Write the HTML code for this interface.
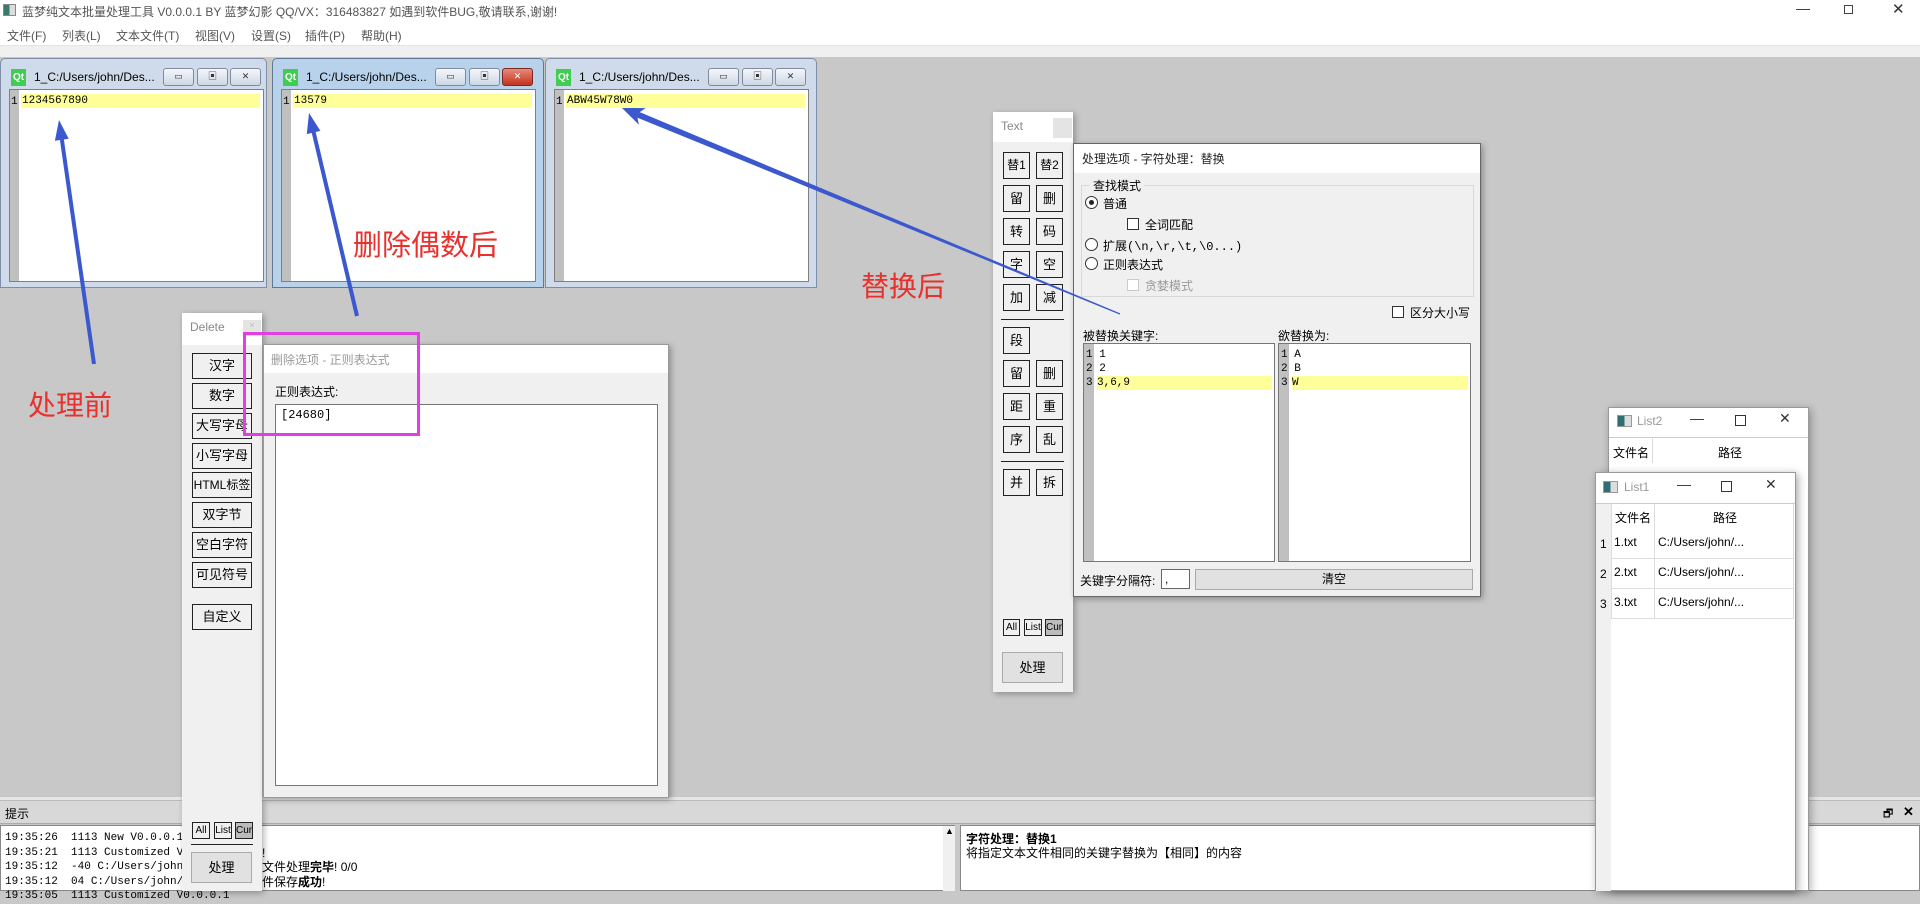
<!DOCTYPE html>
<html><head><meta charset="utf-8">
<style>
*{box-sizing:border-box;margin:0;padding:0}
body{width:1920px;height:891px;overflow:hidden;position:relative;background:#c8c8c8;font-family:"Liberation Sans","Noto Sans CJK SC",sans-serif;font-size:12px;color:#000}
.a{position:absolute}
.mono{font-family:"Liberation Mono","WenQuanYi Zen Hei",monospace}
.sw{position:absolute;top:58px;width:272px;height:230px;background:#cfdbea;border:1px solid #7d8ea6;border-radius:5px 5px 0 0}
.sw .qt{position:absolute;left:10px;top:10px;width:15px;height:17px;background:#41cd52;color:#fff;font-size:10px;font-weight:bold;text-align:center;line-height:17px}
.sw .tt{position:absolute;left:33px;top:11px;font-size:12px;color:#000}
.sw .b{position:absolute;top:9px;width:31px;height:18px;border:1px solid #7f8ca0;border-radius:3px;background:linear-gradient(#f4f7fb,#cdd7e4);font-size:9px;text-align:center;line-height:15px;color:#333}
.sw .ed{position:absolute;left:8px;top:30px;width:255px;height:193px;background:#fff;border:1px solid #808080}
.sw .gut{position:absolute;left:0;top:0;width:9px;height:100%;background:#c0c0c0}
.sw .ln{position:absolute;left:1px;top:6px;font-size:11px}
.sw .hl{position:absolute;left:11px;top:4px;right:3px;height:14px;background:#ffff99;font-size:11px;padding-left:1px;line-height:15px}
.btn{position:absolute;border:1px solid #222;background:#f0f0f0;text-align:center;font-size:13px}
.pb{position:absolute;background:#fff;border:1px solid #777}
.rad{position:absolute;width:13px;height:13px;border:1px solid #333;border-radius:50%;background:#fff}
.chk{position:absolute;width:12px;height:12px;border:1px solid #333;background:#fff}
.lbl{position:absolute;font-size:12px;white-space:nowrap}
</style></head><body>
<!-- title/menu -->
<div class="a" style="left:0;top:0;width:1920px;height:45px;background:#fff"></div>
<div class="a" style="left:3px;top:4px;width:13px;height:12px;border:1px solid #888;background:linear-gradient(90deg,#3a7a6a 50%,#ddd 50%)"></div>
<div class="lbl" style="left:22px;top:3px;color:#555;font-size:12px">蓝梦纯文本批量处理工具 V0.0.0.1 BY 蓝梦幻影 QQ/VX：316483827 如遇到软件BUG,敬请联系,谢谢!</div>
<div class="lbl" style="left:1796px;top:0px;color:#333;font-size:14px">—</div>
<div class="a" style="left:1844px;top:5px;width:9px;height:9px;border:1px solid #444"></div>
<div class="lbl" style="left:1892px;top:0px;color:#333;font-size:15px">✕</div>
<div class="lbl" style="left:7px;top:27px;color:#555">文件(F)</div>
<div class="lbl" style="left:62px;top:27px;color:#555">列表(L)</div>
<div class="lbl" style="left:116px;top:27px;color:#555">文本文件(T)</div>
<div class="lbl" style="left:195px;top:27px;color:#555">视图(V)</div>
<div class="lbl" style="left:251px;top:27px;color:#555">设置(S)</div>
<div class="lbl" style="left:305px;top:27px;color:#555">插件(P)</div>
<div class="lbl" style="left:361px;top:27px;color:#555">帮助(H)</div>
<div class="a" style="left:0;top:45px;width:1920px;height:12px;background:#f0f0f0;border-top:1px solid #e4e4e4"></div>

<!-- sub windows -->
<div class="sw" style="left:0;width:267px">
<div class="qt">Qt</div><div class="tt">1_C:/Users/john/Des...</div>
<div class="b" style="left:162px">▭</div><div class="b" style="left:196px">▣</div><div class="b" style="left:229px">✕</div>
<div class="ed" style="width:255px"><div class="gut"></div><div class="ln mono">1</div><div class="hl mono">1234567890</div></div>
</div>
<div class="sw" style="left:272px;background:#b9d2ec;border-color:#5f7896">
<div class="qt">Qt</div><div class="tt">1_C:/Users/john/Des...</div>
<div class="b" style="left:162px">▭</div><div class="b" style="left:196px">▣</div><div class="b" style="left:229px;background:linear-gradient(#e88a7a,#c2331f);color:#fff;border-color:#7a2a20">✕</div>
<div class="ed"><div class="gut"></div><div class="ln mono">1</div><div class="hl mono">13579</div></div>
</div>
<div class="sw" style="left:545px">
<div class="qt">Qt</div><div class="tt">1_C:/Users/john/Des...</div>
<div class="b" style="left:162px">▭</div><div class="b" style="left:196px">▣</div><div class="b" style="left:229px">✕</div>
<div class="ed"><div class="gut"></div><div class="ln mono">1</div><div class="hl mono">ABW45W78W0</div></div>
</div>

<!-- red labels -->
<div class="lbl" style="left:28px;top:384px;color:#e8302c;font-size:28px">处理前</div>
<div class="lbl" style="left:353px;top:222px;color:#e8302c;font-size:29px">删除偶数后</div>
<div class="lbl" style="left:861px;top:265px;color:#e8302c;font-size:28px">替换后</div>

<!-- dock -->
<div class="a" style="left:0;top:797px;width:1920px;height:4px;background:#e6e6e6"></div>
<div class="a" style="left:0;top:800px;width:1920px;height:24px;background:#d8d8d8;border-top:1px solid #bbb;border-bottom:1px solid #aaa"></div>
<div class="lbl" style="left:5px;top:805px">提示</div>
<div class="lbl" style="left:1883px;top:805px;font-size:11px">🗗</div>
<div class="lbl" style="left:1903px;top:804px;font-size:13px;font-weight:bold">✕</div>
<div class="a" style="left:0;top:825px;width:955px;height:66px;background:#fff;border:1px solid #888"></div>
<div class="a" style="left:943px;top:826px;width:12px;height:65px;background:#f0f0f0"></div>
<div class="lbl" style="left:945px;top:826px;font-size:9px">▲</div>
<div class="a" style="left:960px;top:825px;width:960px;height:66px;background:#fff;border:1px solid #888"></div>
<div class="mono" style="position:absolute;left:5px;top:831px;font-size:11px;line-height:14.5px;white-space:pre">19:35:26  1113 New V0.0.0.1 插件
19:35:21  1113 Customized V0.0.0.1
19:35:12  -40 C:/Users/john/Desktop
19:35:12  04 C:/Users/john/Desktop
19:35:05  1113 Customized V0.0.0.1</div>
<div style="position:absolute;left:262px;top:831px;font-size:12px;line-height:14.5px;white-space:pre;font-family:'Liberation Sans','Noto Sans CJK SC',sans-serif">
!
文件处理<b>完毕</b>! 0/0
件保存<b>成功</b>!</div>
<div class="lbl" style="left:966px;top:830px;font-weight:bold">字符处理：替换1</div>
<div class="lbl" style="left:966px;top:844px">将指定文本文件相同的关键字替换为【相同】的内容</div>

<!-- Delete panel -->
<div class="a" style="left:182px;top:313px;width:80px;height:578px;background:#f0f0f0;box-shadow:2px 2px 6px rgba(0,0,0,.3)"></div>
<div class="a" style="left:182px;top:313px;width:80px;height:32px;background:#fff"></div>
<div class="lbl" style="left:190px;top:320px;color:#888;font-size:12px">Delete</div>
<div class="a" style="left:243px;top:320px;width:18px;height:16px;background:#e4e4e4;color:#bbb;font-size:9px;text-align:center">×</div>
<div class="btn" style="left:192px;top:353px;width:60px;height:26px;line-height:24px">汉字</div>
<div class="btn" style="left:192px;top:383px;width:60px;height:26px;line-height:24px">数字</div>
<div class="btn" style="left:192px;top:413px;width:60px;height:26px;line-height:24px">大写字母</div>
<div class="btn" style="left:192px;top:443px;width:60px;height:26px;line-height:24px">小写字母</div>
<div class="btn" style="left:192px;top:472px;width:60px;height:26px;line-height:24px;font-size:12px">HTML标签</div>
<div class="btn" style="left:192px;top:502px;width:60px;height:26px;line-height:24px">双字节</div>
<div class="btn" style="left:192px;top:532px;width:60px;height:26px;line-height:24px">空白字符</div>
<div class="btn" style="left:192px;top:562px;width:60px;height:26px;line-height:24px">可见符号</div>
<div class="btn" style="left:192px;top:604px;width:60px;height:26px;line-height:24px">自定义</div>
<div class="btn" style="left:192px;top:822px;width:18px;height:17px;font-size:10px;line-height:15px">All</div>
<div class="btn" style="left:214px;top:822px;width:18px;height:17px;font-size:10px;line-height:15px">List</div>
<div class="btn" style="left:235px;top:822px;width:18px;height:17px;font-size:10px;line-height:15px;background:#bbb">Cur</div>
<div class="a" style="left:191px;top:844px;width:62px;height:1px;background:#222"></div>
<div class="btn" style="left:191px;top:852px;width:61px;height:31px;line-height:29px;border-color:#aaa;background:#e1e1e1">处理</div>

<!-- Delete options -->
<div class="a" style="left:263px;top:344px;width:406px;height:454px;background:#f0f0f0;border:1px solid #999;box-shadow:2px 2px 6px rgba(0,0,0,.3)"></div>
<div class="a" style="left:264px;top:345px;width:404px;height:28px;background:#fff"></div>
<div class="lbl" style="left:271px;top:351px;color:#999">删除选项 - 正则表达式</div>
<div class="lbl" style="left:275px;top:383px">正则表达式:</div>
<div class="pb" style="left:275px;top:404px;width:383px;height:382px"></div>
<div class="lbl mono" style="left:281px;top:408px">[24680]</div>
<div class="a" style="left:243px;top:332px;width:177px;height:104px;border:3px solid #e23fe0"></div>

<!-- Text panel -->
<div class="a" style="left:993px;top:112px;width:80px;height:580px;background:#f0f0f0;box-shadow:2px 2px 6px rgba(0,0,0,.3)"></div>
<div class="a" style="left:993px;top:112px;width:80px;height:30px;background:#fff"></div>
<div class="lbl" style="left:1001px;top:119px;color:#888">Text</div>
<div class="a" style="left:1053px;top:118px;width:19px;height:20px;background:#e4e4e4"></div>
<div class="btn" style="left:1003px;top:152px;width:27px;height:27px;line-height:25px;font-size:12px">替1</div>
<div class="btn" style="left:1036px;top:152px;width:27px;height:27px;line-height:25px;font-size:12px">替2</div>
<div class="btn" style="left:1003px;top:185px;width:27px;height:27px;line-height:25px">留</div>
<div class="btn" style="left:1036px;top:185px;width:27px;height:27px;line-height:25px">删</div>
<div class="btn" style="left:1003px;top:218px;width:27px;height:27px;line-height:25px">转</div>
<div class="btn" style="left:1036px;top:218px;width:27px;height:27px;line-height:25px">码</div>
<div class="btn" style="left:1003px;top:251px;width:27px;height:27px;line-height:25px">字</div>
<div class="btn" style="left:1036px;top:251px;width:27px;height:27px;line-height:25px">空</div>
<div class="btn" style="left:1003px;top:284px;width:27px;height:27px;line-height:25px">加</div>
<div class="btn" style="left:1036px;top:284px;width:27px;height:27px;line-height:25px">减</div>
<div class="a" style="left:1001px;top:319px;width:63px;height:1px;background:#222"></div>
<div class="btn" style="left:1003px;top:327px;width:27px;height:27px;line-height:25px">段</div>
<div class="btn" style="left:1003px;top:360px;width:27px;height:27px;line-height:25px">留</div>
<div class="btn" style="left:1036px;top:360px;width:27px;height:27px;line-height:25px">删</div>
<div class="btn" style="left:1003px;top:393px;width:27px;height:27px;line-height:25px">距</div>
<div class="btn" style="left:1036px;top:393px;width:27px;height:27px;line-height:25px">重</div>
<div class="btn" style="left:1003px;top:426px;width:27px;height:27px;line-height:25px">序</div>
<div class="btn" style="left:1036px;top:426px;width:27px;height:27px;line-height:25px">乱</div>
<div class="a" style="left:1001px;top:461px;width:63px;height:1px;background:#222"></div>
<div class="btn" style="left:1003px;top:469px;width:27px;height:27px;line-height:25px">并</div>
<div class="btn" style="left:1036px;top:469px;width:27px;height:27px;line-height:25px">拆</div>
<div class="btn" style="left:1003px;top:619px;width:17px;height:17px;font-size:10px;line-height:15px">All</div>
<div class="btn" style="left:1024px;top:619px;width:18px;height:17px;font-size:10px;line-height:15px">List</div>
<div class="btn" style="left:1045px;top:619px;width:18px;height:17px;font-size:10px;line-height:15px;background:#bbb">Cur</div>
<div class="btn" style="left:1002px;top:652px;width:61px;height:31px;line-height:29px;border-color:#aaa;background:#e1e1e1">处理</div>

<!-- Replace options -->
<div class="a" style="left:1073px;top:143px;width:408px;height:454px;background:#f0f0f0;border:1px solid #666;box-shadow:2px 2px 6px rgba(0,0,0,.3)"></div>
<div class="a" style="left:1074px;top:144px;width:406px;height:29px;background:#fff"></div>
<div class="lbl" style="left:1082px;top:150px;color:#222">处理选项 - 字符处理：替换</div>
<div class="a" style="left:1081px;top:185px;width:393px;height:112px;border:1px solid #d8d8d8"></div>
<div class="lbl" style="left:1090px;top:177px;background:#f0f0f0;padding:0 3px">查找模式</div>
<div class="rad" style="left:1085px;top:196px"></div><div class="a" style="left:1089px;top:200px;width:5px;height:5px;border-radius:50%;background:#222"></div>
<div class="lbl" style="left:1103px;top:195px">普通</div>
<div class="chk" style="left:1127px;top:218px"></div><div class="lbl" style="left:1145px;top:216px">全词匹配</div>
<div class="rad" style="left:1085px;top:238px"></div><div class="lbl mono" style="left:1103px;top:237px">扩展(\n,\r,\t,\0...)</div>
<div class="rad" style="left:1085px;top:257px"></div><div class="lbl" style="left:1103px;top:256px">正则表达式</div>
<div class="chk" style="left:1127px;top:279px;border-color:#ccc"></div><div class="lbl" style="left:1145px;top:277px;color:#999">贪婪模式</div>
<div class="chk" style="left:1392px;top:306px"></div><div class="lbl" style="left:1410px;top:304px">区分大小写</div>
<div class="lbl" style="left:1083px;top:327px">被替换关键字:</div>
<div class="lbl" style="left:1278px;top:327px">欲替换为:</div>
<div class="pb" style="left:1083px;top:343px;width:192px;height:219px"><div class="a" style="left:0;top:0;width:10px;height:100%;background:#c0c0c0"></div>
<div class="mono" style="position:absolute;left:2px;top:4px;font-size:11px;line-height:14px;white-space:pre">1 1
2 2
3</div><div class="a mono" style="left:13px;top:32px;width:175px;height:14px;background:#ffff99;font-size:11px;line-height:14px">3,6,9</div></div>
<div class="pb" style="left:1278px;top:343px;width:193px;height:219px"><div class="a" style="left:0;top:0;width:10px;height:100%;background:#c0c0c0"></div>
<div class="mono" style="position:absolute;left:2px;top:4px;font-size:11px;line-height:14px;white-space:pre">1 A
2 B
3</div><div class="a mono" style="left:13px;top:32px;width:176px;height:14px;background:#ffff99;font-size:11px;line-height:14px">W</div></div>
<div class="lbl" style="left:1080px;top:572px">关键字分隔符:</div>
<div class="pb" style="left:1161px;top:569px;width:29px;height:20px;border-color:#666"><span class="a" style="left:3px;top:2px">,</span></div>
<div class="btn" style="left:1195px;top:569px;width:278px;height:21px;line-height:19px;border-color:#aaa;background:#e1e1e1;font-size:12px">清空</div>

<!-- List2 -->
<div class="a" style="left:1608px;top:407px;width:201px;height:484px;background:#fff;border:1px solid #999;box-shadow:2px 2px 8px rgba(0,0,0,.3)"></div>
<div class="a" style="left:1617px;top:415px;width:15px;height:12px;border:1px solid #999;background:linear-gradient(90deg,#2f6e73 50%,#ddd 50%)"></div>
<div class="lbl" style="left:1637px;top:414px;color:#999">List2</div>
<div class="lbl" style="left:1690px;top:410px;color:#333;font-size:14px">—</div>
<div class="a" style="left:1735px;top:415px;width:11px;height:11px;border:1px solid #333"></div>
<div class="lbl" style="left:1779px;top:410px;color:#333;font-size:14px">✕</div>
<div class="a" style="left:1609px;top:437px;width:199px;height:1px;background:#ccc"></div>
<div class="lbl" style="left:1613px;top:444px">文件名</div>
<div class="lbl" style="left:1718px;top:444px">路径</div>
<div class="a" style="left:1652px;top:438px;width:1px;height:25px;background:#ddd"></div>
<!-- List1 -->
<div class="a" style="left:1595px;top:472px;width:201px;height:419px;background:#fff;border:1px solid #999;box-shadow:2px 2px 8px rgba(0,0,0,.35)"></div>
<div class="a" style="left:1596px;top:504px;width:15px;height:387px;background:#f0f0f0"></div>
<div class="a" style="left:1603px;top:481px;width:15px;height:12px;border:1px solid #999;background:linear-gradient(90deg,#2f6e73 50%,#ddd 50%)"></div>
<div class="lbl" style="left:1624px;top:480px;color:#999">List1</div>
<div class="lbl" style="left:1677px;top:476px;color:#333;font-size:14px">—</div>
<div class="a" style="left:1721px;top:481px;width:11px;height:11px;border:1px solid #333"></div>
<div class="lbl" style="left:1765px;top:476px;color:#333;font-size:14px">✕</div>
<div class="a" style="left:1596px;top:503px;width:199px;height:1px;background:#ccc"></div>
<div class="lbl" style="left:1615px;top:509px">文件名</div>
<div class="lbl" style="left:1713px;top:509px">路径</div>
<div class="a" style="left:1611px;top:504px;width:1px;height:114px;background:#ddd"></div>
<div class="a" style="left:1654px;top:504px;width:1px;height:114px;background:#ddd"></div>
<div class="a" style="left:1793px;top:504px;width:1px;height:114px;background:#ddd"></div>
<div class="a" style="left:1611px;top:558px;width:183px;height:1px;background:#ddd"></div>
<div class="a" style="left:1611px;top:588px;width:183px;height:1px;background:#ddd"></div>
<div class="a" style="left:1611px;top:618px;width:183px;height:1px;background:#ddd"></div>
<div class="lbl" style="left:1600px;top:537px">1</div><div class="lbl" style="left:1614px;top:535px">1.txt</div><div class="lbl" style="left:1658px;top:535px">C:/Users/john/...</div>
<div class="lbl" style="left:1600px;top:567px">2</div><div class="lbl" style="left:1614px;top:565px">2.txt</div><div class="lbl" style="left:1658px;top:565px">C:/Users/john/...</div>
<div class="lbl" style="left:1600px;top:597px">3</div><div class="lbl" style="left:1614px;top:595px">3.txt</div><div class="lbl" style="left:1658px;top:595px">C:/Users/john/...</div>

<!-- arrows -->
<svg class="a" style="left:0;top:0" width="1920" height="891">
<g fill="#3b58cf" stroke="none">
<line x1="61.8" y1="139" x2="94" y2="364" stroke="#3b58cf" stroke-width="4"/>
<polygon points="59,120 68.7,138.8 54.9,140.8"/>
<line x1="313.6" y1="132" x2="357" y2="316" stroke="#3b58cf" stroke-width="4"/>
<polygon points="309,113 320.4,130.9 306.8,134.1"/>
<polygon points="622,108 645.7,108.1 639.7,112.1 1120.2,313.4 1119.8,314.6 637.5,117.7 638.9,124.7"/>
</g>
</svg>
</body></html>
